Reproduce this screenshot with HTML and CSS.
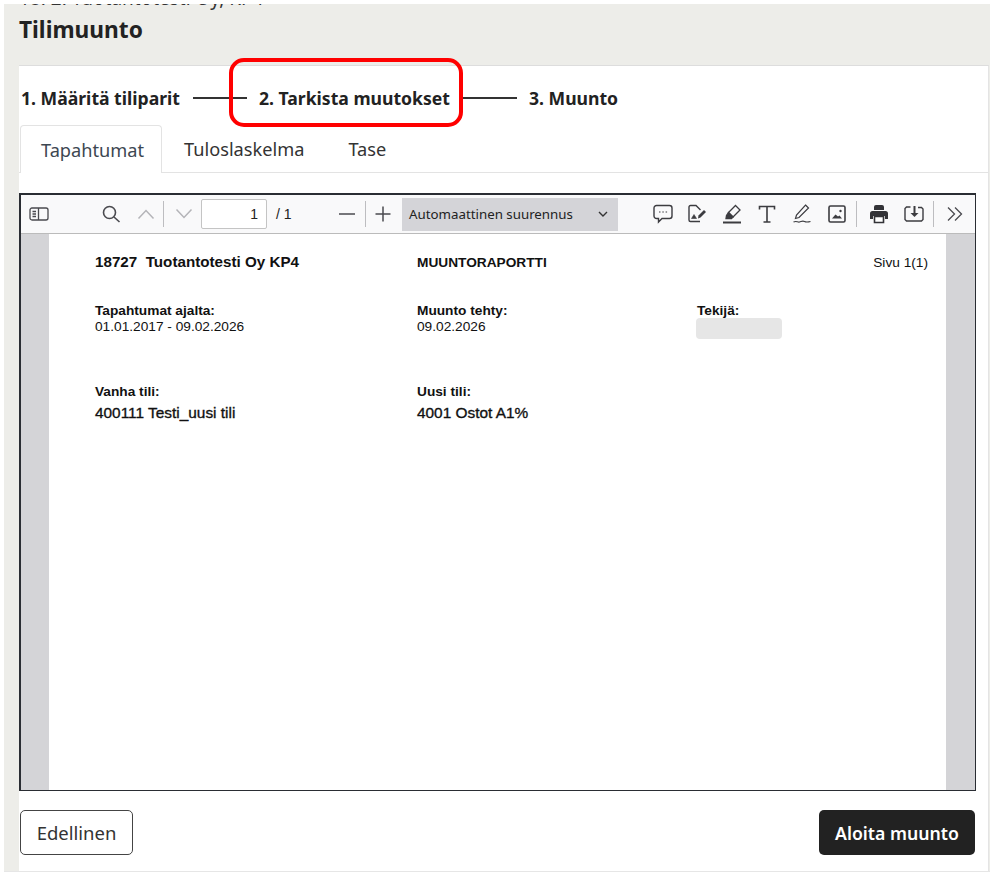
FILE: index.html
```html
<!DOCTYPE html>
<html lang="fi">
<head>
    <meta charset="UTF-8">
    <meta name="viewport" content="width=device-width, initial-scale=1.0">
    <title>Tilimuunto</title>
    <link rel="stylesheet" href="styles.css">
</head>
<body>
    <div class="frame">
        <div class="header">
            <div class="crumb">18. 2. Tuotantotesti Oy, KP4</div>
            <h1>Tilimuunto</h1>
        </div>

        <div class="card">
            <div class="steps">
                <span class="step">1. Määritä tiliparit</span>
                <span class="step-line"></span>
                <span class="step step-current">2. Tarkista muutokset<span class="highlight"></span></span>
                <span class="step-line"></span>
                <span class="step">3. Muunto</span>
            </div>

            <div class="tabs">
                <a href="#" class="tab tab-active">Tapahtumat</a>
                <a href="#" class="tab">Tuloslaskelma</a>
                <a href="#" class="tab">Tase</a>
            </div>

            <div class="viewer">
                <div class="toolbar">
                    <span class="tool tool-sidebar">
                        <svg width="20" height="16" viewBox="0 0 20 16" fill="none" stroke="#4a4a4f" stroke-width="1.3"><rect x="1" y="2" width="18" height="12" rx="2"/><path d="M9.5 2v12"/><path d="M3.5 5.5h3.5M3.5 8h3.5M3.5 10.5h3.5"/></svg>
                    </span>
                    <span class="tool tool-search">
                        <svg width="20" height="20" viewBox="0 0 20 20" fill="none" stroke="#4a4a4f" stroke-width="1.6"><circle cx="8.5" cy="8.5" r="6"/><path d="M13 13l5.5 5"/></svg>
                    </span>
                    <span class="tool tool-up">
                        <svg width="18" height="12" viewBox="0 0 18 12" fill="none" stroke="#b4b4b8" stroke-width="1.5"><path d="M1.5 10.5L9 2.5l7.5 8"/></svg>
                    </span>
                    <span class="sep"></span>
                    <span class="tool tool-down">
                        <svg width="18" height="12" viewBox="0 0 18 12" fill="none" stroke="#b4b4b8" stroke-width="1.5"><path d="M1.5 1.5L9 9.5l7.5-8"/></svg>
                    </span>
                    <input class="page-input" type="text" value="1">
                    <span class="page-total">/ 1</span>
                    <span class="tool tool-minus">
                        <svg width="18" height="4" viewBox="0 0 18 4" fill="none" stroke="#4a4a4f" stroke-width="1.5"><path d="M1 2h16"/></svg>
                    </span>
                    <span class="sep"></span>
                    <span class="tool tool-plus">
                        <svg width="16" height="16" viewBox="0 0 16 16" fill="none" stroke="#4a4a4f" stroke-width="1.5"><path d="M0.5 8h15M8 0.5v15"/></svg>
                    </span>
                    <div class="zoom-select">
                        <span>Automaattinen suurennus</span>
                        <svg width="10" height="7" viewBox="0 0 10 7" fill="none" stroke="#333" stroke-width="1.4"><path d="M1 1l4 4 4-4"/></svg>
                    </div>
                    <div class="tools-right">
                        <span class="tool tool-comment">
                            <svg width="20" height="20" viewBox="0 0 20 20" fill="none" stroke="#3c3c40" stroke-width="1.4"><path d="M3.5 1.5h13A2.5 2.5 0 0 1 19 4v8a2.5 2.5 0 0 1-2.5 2.5H9L5.5 18v-3.5h-2A2.5 2.5 0 0 1 1 12V4a2.5 2.5 0 0 1 2.5-2.5z"/><path d="M6 8h1.500M9.300 8h1.500M12.600 8h1.500" stroke-width="1.1"/></svg>
                        </span>
                        <span class="tool">
                            <svg width="20" height="20" viewBox="0 0 20 20" fill="none" stroke="#3c3c40" stroke-width="1.4"><path d="M13 17.500H3.500A1.500 1.500 0 0 1 2 16V3A1.500 1.500 0 0 1 3.500 1.500H9l4.500 4.500"/><path d="M4.500 14.500l2.500-4 2.500 4z" fill="#3c3c40" stroke-width="0.6"/><path d="M11 14.500l.5-3L17 6l2 2-5.500 5.500z" fill="#3c3c40" stroke="none"/></svg>
                        </span>
                        <span class="tool">
                            <svg width="20" height="20" viewBox="0 0 20 20" fill="none" stroke="#3c3c40" stroke-width="1.3"><path d="M13.500 1.500L18 6l-7 7-4.500-4.500z"/><path d="M6.500 8.500L11 13l-1.500 1.500H4l.5-3z" fill="#3c3c40"/><path d="M1 18.500h18" stroke-width="2"/></svg>
                        </span>
                        <span class="tool">
                            <svg width="20" height="20" viewBox="0 0 20 20" fill="none" stroke="#3c3c40" stroke-width="1.6"><path d="M2.500 5.500V2.500h15v3M10 2.500V18M6.500 18h7"/></svg>
                        </span>
                        <span class="tool">
                            <svg width="20" height="20" viewBox="0 0 20 20" fill="none" stroke="#3c3c40" stroke-width="1.2"><path d="M13.500 1l3 3L7 13.500l-3.500 1 1-3.500z"/><path d="M1.500 18c3-1.500 4 .5 6 0s3-1.500 5-.5 4 .5 6 0"/></svg>
                        </span>
                        <span class="tool">
                            <svg width="20" height="20" viewBox="0 0 20 20" fill="none" stroke="#3c3c40" stroke-width="1.6"><rect x="2" y="2" width="16" height="16" rx="1.500"/><path d="M5 14.500l3.500-4 2.500 2 1.500-1 2.500 3z" fill="#3c3c40" stroke="none"/><circle cx="13.500" cy="7" r="1.200" fill="#3c3c40" stroke="none"/></svg>
                        </span>
                        <span class="sep"></span>
                        <span class="tool">
                            <svg width="20" height="20" viewBox="0 0 20 20"><path fill="#333337" d="M5 3a2 2 0 0 1 2-2h6a2 2 0 0 1 2 2v3H5zM3.500 7h13A2.500 2.500 0 0 1 19 9.500V15h-3v-3H4v3H1V9.500A2.500 2.500 0 0 1 3.500 7z"/><path fill="#fff" stroke="#333337" stroke-width="1.6" d="M5.500 12.500h9v6h-9z"/></svg>
                        </span>
                        <span class="tool">
                            <svg width="20" height="20" viewBox="0 0 20 20" fill="none" stroke="#3c3c40" stroke-width="1.4"><path d="M6.500 3H2.500L1 4.500v11L2.500 17h15l1.500-1.500V5l-1.500-1.500H14"/><path d="M10.500 2v8" stroke-width="2"/><path d="M6.500 9h8l-4 4z" fill="#3c3c40" stroke="none"/></svg>
                        </span>
                        <span class="sep"></span>
                        <span class="tool tool-more">
                            <svg width="18" height="16" viewBox="0 0 18 16" fill="none" stroke="#4a4a4f" stroke-width="1.3"><path d="M2 1.500L8.500 8 2 14.500M9 1.500L15.500 8 9 14.500"/></svg>
                        </span>
                    </div>
                </div>

                <div class="pages">
                    <div class="page">
                        <div class="report-row report-top">
                            <div class="report-title">18727&nbsp; Tuotantotesti Oy KP4</div>
                            <div class="report-name">MUUNTORAPORTTI</div>
                            <div class="report-page">Sivu 1(1)</div>
                        </div>
                        <div class="report-row report-meta">
                            <div>
                                <div class="label">Tapahtumat ajalta:</div>
                                <div class="value">01.01.2017 - 09.02.2026</div>
                            </div>
                            <div>
                                <div class="label">Muunto tehty:</div>
                                <div class="value">09.02.2026</div>
                            </div>
                            <div>
                                <div class="label">Tekijä:</div>
                                <div class="hidden-name"></div>
                            </div>
                        </div>
                        <div class="report-row report-accounts">
                            <div>
                                <div class="label">Vanha tili:</div>
                                <div class="account">400111 Testi_uusi tili</div>
                            </div>
                            <div>
                                <div class="label">Uusi tili:</div>
                                <div class="account">4001 Ostot A1%</div>
                            </div>
                        </div>
                    </div>
                </div>
            </div>

            <div class="actions">
                <button class="btn btn-back">Edellinen</button>
                <button class="btn btn-start">Aloita muunto</button>
            </div>
        </div>
    </div>
</body>
</html>
```

FILE: styles.css
```css
body { margin: 0; padding: 4px 2px 2px 4px; background-color: #fff; font-family: "Noto Sans", sans-serif; color: #222; }

.frame { height: 868px; overflow: hidden; display: flex; flex-direction: column; background-color: #edede9; border-bottom: 1px solid #e6e6e6; box-sizing: border-box; }

.header { height: 61px; padding-left: 15px; flex: none; }
.crumb { font-size: 19px; line-height: 20px; margin-top: -16px; color: #333; white-space: nowrap; }
h1 { margin: 6px 0 0; font-size: 22.7px; line-height: 32px; font-weight: 700; }

.card { flex: 1; margin-left: 15px; margin-right: 1px; background-color: #fff; border-top: 1px solid #ddd; border-right: 1px solid #e4e4e4; display: flex; flex-direction: column; }

.steps { display: flex; align-items: center; height: 64px; padding-left: 2px; font-size: 17.6px; line-height: 24px; font-weight: 700; flex: none; }
.step { white-space: nowrap; position: relative; }
.step-line { width: 54px; height: 2px; background-color: #333; margin: 0 12px 0 13px; }
.highlight { position: absolute; left: -30px; right: -13px; top: -28px; bottom: -17px; border: 4px solid #f00; border-radius: 15px; }

.tabs { display: flex; height: 48px; box-sizing: border-box; border-bottom: 1px solid #e3e3e3; padding-left: 1px; flex: none; margin-top: -5px; }
.tab { color: #333; text-decoration: none; font-size: 18.2px; line-height: 48px; padding: 0 22px; }
.tab-active { color: #3d4752; background-color: #fff; border: 1px solid #e3e3e3; border-bottom: 0; border-radius: 4px 4px 0 0; height: 48px; box-sizing: border-box; padding: 0 17px 0 20px; }

.viewer { margin: 20px 12px 0 0; height: 598px; box-sizing: border-box; border: 1px solid #2a2d33; border-width: 2px 1px 1px 2px; display: flex; flex-direction: column; flex: none; }

.toolbar { display: flex; align-items: center; height: 39px; background-color: #f9f9fa; border-bottom: 1px solid #bbb; box-sizing: border-box; flex: none; font-family: "Liberation Sans", sans-serif; }
.tool { display: flex; justify-content: center; align-items: center; width: 20px; height: 24px; flex: none; }
.sep { width: 1px; height: 26px; background-color: #bdbdc0; flex: none; }
.tool-sidebar { margin-left: 8px; }
.tool-search { margin-left: 52px; }
.tool-up { margin-left: 15px; margin-right: 7px; }
.tool-down { margin-left: 10px; margin-right: 7px; }
.page-input { width: 66px; height: 30px; box-sizing: border-box; border: 1px solid #c4c4c4; border-radius: 2px; background-color: #fff; text-align: right; padding: 0 8px; font: 14px "Liberation Sans", sans-serif; color: #222; }
.page-total { font-size: 14px; margin-left: 9px; width: 61px; flex: none; }
.tool-minus { margin-right: 8px; }
.tool-plus { margin-left: 7px; margin-right: 9px; }
.zoom-select { display: flex; align-items: center; justify-content: space-between; width: 216px; height: 33px; box-sizing: border-box; padding: 0 10px 0 7px; background-color: #d4d4d8; font-family: "Noto Sans", sans-serif; font-size: 13.3px; color: #222; flex: none; }
.tools-right { display: flex; align-items: center; margin-left: 26px; }
.tools-right .tool { width: 35px; }
.tools-right .tool-comment { width: 33px; margin-left: 2px; }
.tools-right .tool-more { margin-left: -1px; }
.tools-right .sep { margin: 0 4px 0 2px; }

.pages { flex: 1; background-color: #d4d4d7; padding: 0 29px 0 28px; display: flex; }
.page { flex: 1; background-color: #fff; padding: 0 18px 0 46px; font-family: "Liberation Sans", sans-serif; color: #111; }

.report-row { display: grid; grid-template-columns: 322px 280px 1fr; }
.report-top { padding-top: 19px; line-height: 18px; align-items: baseline; }
.report-title { font-size: 15.2px; font-weight: 700; white-space: nowrap; }
.report-name { font-size: 13.7px; font-weight: 700; }
.report-page { font-size: 13.7px; text-align: right; }
.report-meta { padding-top: 31px; }
.report-accounts { padding-top: 45px; }
.label { font-size: 13.7px; line-height: 16px; font-weight: 700; }
.value { font-size: 13.7px; line-height: 16px; }
.account { font-size: 15.4px; line-height: 16px; margin-top: 5px; -webkit-text-stroke: 0.35px #111; }
.hidden-name { width: 86px; height: 21px; margin: -1px 0 0 -1px; background-color: #e6e6e6; border-radius: 4px; }

.actions { display: flex; justify-content: space-between; padding: 19px 13px 0 1px; }
.btn { height: 45px; border-radius: 5px; font-family: "Noto Sans", sans-serif; box-sizing: border-box; cursor: pointer; }
.btn-back { width: 113px; background-color: #fff; border: 1.5px solid #444; color: #333; font-size: 18.5px; }
.btn-start { width: 156px; background-color: #222; border: none; color: #fff; font-size: 17.7px; font-weight: 600; }
```
